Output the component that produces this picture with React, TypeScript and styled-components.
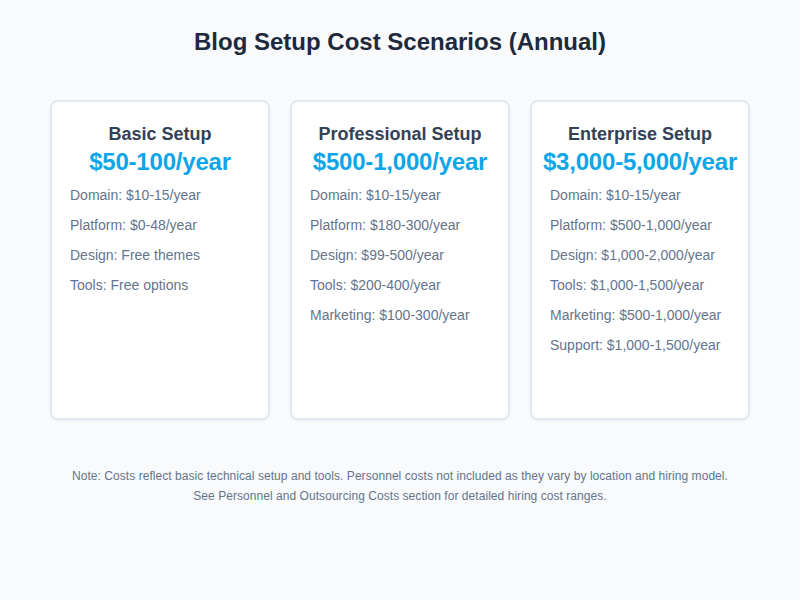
import React from 'react';
import styled, { createGlobalStyle } from 'styled-components';

type Scenario = {
  title: string,
  price: string,
  items: string[],
}

const scenarios: Scenario[] = [
  {
    title: 'Basic Setup',
    price: '$50-100/year',
    items: ['Domain: $10-15/year', 'Platform: $0-48/year', 'Design: Free themes', 'Tools: Free options']
  },
  {
    title: 'Professional Setup',
    price: '$500-1,000/year',
    items: ['Domain: $10-15/year', 'Platform: $180-300/year', 'Design: $99-500/year', 'Tools: $200-400/year', 'Marketing: $100-300/year']
  },
  {
    title: 'Enterprise Setup',
    price: '$3,000-5,000/year',
    items: ['Domain: $10-15/year', 'Platform: $500-1,000/year', 'Design: $1,000-2,000/year', 'Tools: $1,000-1,500/year', 'Marketing: $500-1,000/year', 'Support: $1,000-1,500/year']
  }
];

const GlobalStyle = createGlobalStyle`
  html, body {
    margin: 0;
    padding: 0;
    background: #f8fafc;
    font-family: "Liberation Sans", Arial, sans-serif;
  }
`;

const Page = styled.div`
  width: 800px;
  height: 600px;
  box-sizing: border-box;
  padding: 28px 50px 0;
  display: flex;
  flex-direction: column;
  align-items: stretch;
`;

const Heading = styled.h1`
  margin: 0;
  font-size: 24px;
  line-height: 28px;
  font-weight: 700;
  color: #1e293b;
  text-align: center;
`;

const CardRow = styled.div`
  margin-top: 44px;
  display: grid;
  grid-template-columns: repeat(3, 1fr);
  gap: 20px;
`;

const Card = styled.div`
  height: 320px;
  box-sizing: border-box;
  background: #ffffff;
  border: 2px solid #e2e8f0;
  border-radius: 8px;
  box-shadow: 0 1px 3px rgba(15, 23, 42, 0.05);
  padding: 21px 18px;
  display: flex;
  flex-direction: column;
`;

const CardTitle = styled.div`
  font-size: 18px;
  line-height: 22px;
  font-weight: 700;
  color: #334155;
  text-align: center;
`;

const Price = styled.div`
  margin: 3px -10px 0;
  font-size: 24px;
  line-height: 28px;
  font-weight: 700;
  color: #0ea5e9;
  text-align: center;
  white-space: nowrap;
  letter-spacing: -0.2px;
`;

const ItemList = styled.ul`
  list-style: none;
  margin: 4px 0 0;
  padding: 0;
`;

const Item = styled.li`
  font-size: 14px;
  line-height: 30px;
  color: #64748b;
`;

const Note = styled.p`
  margin: 46px -20px 0;
  font-size: 12px;
  line-height: 20px;
  color: #64748b;
  text-align: center;
  letter-spacing: 0.05px;
`;

const App: React.FC = () => {
  return (
    <>
      <GlobalStyle />
      <Page>
        <Heading>Blog Setup Cost Scenarios (Annual)</Heading>
        <CardRow>
          {scenarios.map((s) => (
            <Card key={s.title}>
              <CardTitle>{s.title}</CardTitle>
              <Price>{s.price}</Price>
              <ItemList>
                {s.items.map((item) => (
                  <Item key={item}>{item}</Item>
                ))}
              </ItemList>
            </Card>
          ))}
        </CardRow>
        <Note>
          Note: Costs reflect basic technical setup and tools. Personnel costs not included as they vary by location and hiring model.
          <br />
          See Personnel and Outsourcing Costs section for detailed hiring cost ranges.
        </Note>
      </Page>
    </>
  );
};

export default App;
